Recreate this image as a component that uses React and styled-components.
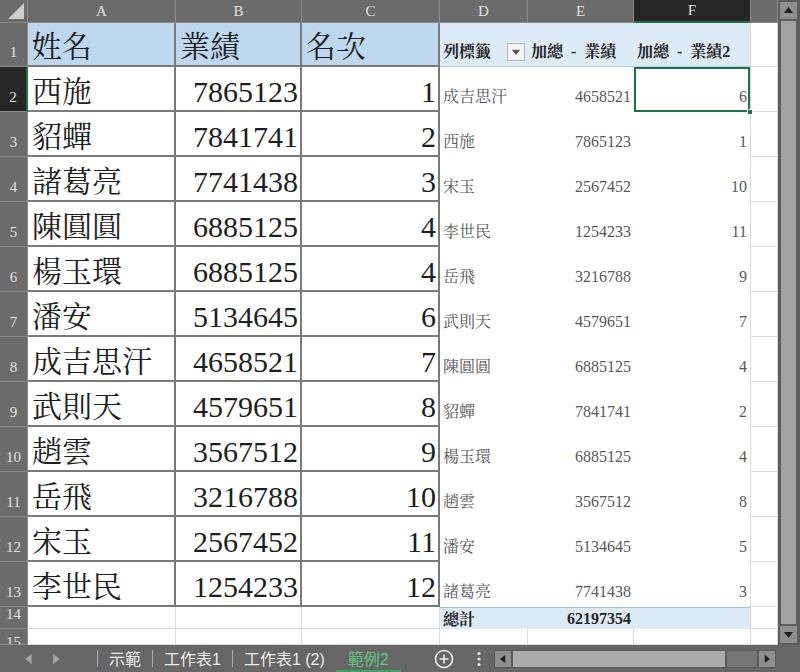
import React from "react";
import styled, { createGlobalStyle, css } from "styled-components";

const GlobalStyle = createGlobalStyle`
  html, body {
    margin: 0;
    padding: 0;
    background: #666;
  }
`;

const serif = `"Liberation Serif", "Noto Serif CJK TC", "Noto Sans CJK TC", serif`;
const sans = `"Liberation Sans", "Noto Sans CJK TC", sans-serif`;

const Window = styled.div`
  width: 800px;
  height: 672px;
  display: flex;
  flex-direction: column;
  overflow: hidden;
  background: #666;
`;

const SheetArea = styled.div`
  display: flex;
  height: 645px;
`;

const Grid = styled.div`
  display: grid;
  grid-template-columns: 28px 148px 126px 138px 88px 106px 117px 27px;
  grid-template-rows: 23px 44px repeat(12, 45px) 22px 16px;
  width: 778px;
  background: #fff;
  overflow: hidden;
`;

const Corner = styled.div`
  background: #6b6b6b;
  border-right: 1px solid #888;
  border-bottom: 1px solid #888;
  box-sizing: border-box;
  display: flex;
  align-items: flex-end;
  justify-content: flex-end;
  padding: 0 3px 3px 0;
`;

const ColHead = styled.div`
  box-sizing: border-box;
  display: flex;
  align-items: center;
  justify-content: center;
  font-family: ${serif};
  font-size: 15px;
  color: #e2e2e2;
  background: ${(p) => (p.$active ? "#262626" : "#6b6b6b")};
  border-right: 1px solid #8a8a8a;
  border-bottom: ${(p) => (p.$active ? "2px solid #217346" : "1px solid #8a8a8a")};
`;

const RowHead = styled.div`
  box-sizing: border-box;
  display: flex;
  justify-content: center;
  align-items: ${(p) => (p.$cut ? "flex-start" : "flex-end")};
  padding: ${(p) => (p.$cut ? "5px 0 0" : "0 0 6px")};
  overflow: hidden;
  font-family: ${serif};
  font-size: 15px;
  line-height: 16px;
  color: #e2e2e2;
  background: ${(p) => (p.$active ? "#262626" : "#6b6b6b")};
  border-bottom: 1px solid #8a8a8a;
  border-right: ${(p) => (p.$active ? "2px solid #217346" : "1px solid #8a8a8a")};
`;

const kinds = {
  th: css`
    background: #bdd7ee;
    border-right: 2px solid #7a7a7a;
    border-bottom: 2px solid #7a7a7a;
    font-size: 30px;
    line-height: 34px;
    color: #1e1e1e;
    padding: 0 2px 1px 4px;
  `,
  td: css`
    background: #fff;
    border-right: 2px solid #7a7a7a;
    border-bottom: 2px solid #7a7a7a;
    font-size: 30px;
    line-height: 34px;
    color: #1e1e1e;
    padding: 0 2px 1px 4px;
  `,
  ph: css`
    background: #ddebf7;
    border-bottom: 1px solid #b4d0ea;
    font-size: 16px;
    font-weight: bold;
    line-height: 20px;
    color: #262626;
    padding: 0 3px 4px;
    justify-content: space-between;
  `,
  pv: css`
    background: #fff;
    font-size: 16px;
    line-height: 20px;
    color: #595959;
    padding: 0 3px 5px;
  `,
  tot: css`
    background: #ddebf7;
    border-top: 1px solid #9bc2e6;
    font-size: 16px;
    font-weight: bold;
    color: #262626;
    align-items: center;
    padding: 0 3px;
  `,
  blank: css`
    background: #fff;
    border-right: 1px solid #dadada;
    border-bottom: 1px solid #dadada;
  `,
};

const Cell = styled.div`
  position: relative;
  box-sizing: border-box;
  display: flex;
  align-items: flex-end;
  justify-content: ${(p) => (p.$right ? "flex-end" : "flex-start")};
  overflow: hidden;
  white-space: pre;
  font-family: ${serif};
  ${(p) => kinds[p.$kind]}
  ${(p) => p.$edge && "border-right: 1px solid #dadada;"}
  ${(p) => p.$selected && "box-shadow: inset 0 0 0 2px #217346; overflow: visible;"}
`;

const FillHandle = styled.span`
  position: absolute;
  right: -3px;
  bottom: -3px;
  width: 6px;
  height: 6px;
  background: #217346;
  border: 1px solid #fff;
  box-sizing: border-box;
  z-index: 2;
`;

const DropBtn = styled.span`
  width: 18px;
  height: 18px;
  box-sizing: border-box;
  border: 1px solid #b8b8b8;
  background: #f4f4f4;
  display: flex;
  align-items: center;
  justify-content: center;
  margin-bottom: 1px;
`;

const VScroll = styled.div`
  width: 22px;
  display: flex;
  flex-direction: column;
  background: #5c5c5c;
  padding: 2px 3px 2px 2px;
  box-sizing: border-box;
  gap: 2px;
`;

const ScrollBtn = styled.div`
  height: ${(p) => p.$h || 17}px;
  width: ${(p) => p.$w || "auto"};
  flex: none;
  background: #8e8e8e;
  display: flex;
  align-items: center;
  justify-content: center;
`;

const VThumb = styled.div`
  flex: 1;
  background: #a2a2a2;
  margin: 0 1px;
`;

const TabBar = styled.div`
  height: 27px;
  display: flex;
  align-items: stretch;
  background: #666;
  font-family: ${sans};
  font-size: 16px;
  color: #ececec;
`;

const NavArea = styled.div`
  width: 97px;
  display: flex;
  align-items: center;
  gap: 17px;
  padding-left: 24px;
  box-sizing: border-box;
`;

const Sep = styled.span`
  width: 1px;
  height: 17px;
  align-self: center;
  background: #a8a8a8;
`;

const Tab = styled.div`
  display: flex;
  align-items: center;
  padding: 0 ${(p) => p.$pad || 11}px;
  color: ${(p) => (p.$active ? "#63c384" : "#ececec")};
  border-bottom: ${(p) => (p.$active ? "2px solid #3fa15f" : "2px solid transparent")};
  box-sizing: border-box;
`;

const IconSlot = styled.div`
  display: flex;
  align-items: center;
  justify-content: center;
  width: ${(p) => p.$w}px;
  margin-left: ${(p) => p.$ml || 0}px;
`;

const HScroll = styled.div`
  margin-left: 10px;
  width: 282px;
  height: 18px;
  align-self: center;
  display: flex;
  gap: 2px;
  background: #5a5a5a;
  padding: 1px;
  box-sizing: border-box;
`;

const HThumb = styled.div`
  width: 212px;
  background: #ababab;
`;

const HTrack = styled.div`
  flex: 1;
  background: #757575;
`;

const Tri = ({ dir, color = "#1e1e1e", size = 9 }) => {
  const pts = {
    up: "0,7 9,7 4.5,1",
    down: "0,2 9,2 4.5,8",
    left: "7,0 7,9 1,4.5",
    right: "2,0 2,9 8,4.5",
  }[dir];
  return (
    <svg width={size} height={size} viewBox="0 0 9 9">
      <polygon points={pts} fill={color} />
    </svg>
  );
};

const table = [
  ["西施", 7865123, 1],
  ["貂蟬", 7841741, 2],
  ["諸葛亮", 7741438, 3],
  ["陳圓圓", 6885125, 4],
  ["楊玉環", 6885125, 4],
  ["潘安", 5134645, 6],
  ["成吉思汗", 4658521, 7],
  ["武則天", 4579651, 8],
  ["趙雲", 3567512, 9],
  ["岳飛", 3216788, 10],
  ["宋玉", 2567452, 11],
  ["李世民", 1254233, 12],
];

const pivot = [
  ["成吉思汗", 4658521, 6],
  ["西施", 7865123, 1],
  ["宋玉", 2567452, 10],
  ["李世民", 1254233, 11],
  ["岳飛", 3216788, 9],
  ["武則天", 4579651, 7],
  ["陳圓圓", 6885125, 4],
  ["貂蟬", 7841741, 2],
  ["楊玉環", 6885125, 4],
  ["趙雲", 3567512, 8],
  ["潘安", 5134645, 5],
  ["諸葛亮", 7741438, 3],
];

// G is only partly in view, its letter sits past the edge
const letters = ["A", "B", "C", "D", "E", "F", ""];

function Sheet() {
  const cells = [];
  cells.push(
    <Corner key="corner">
      <svg width="16" height="16" viewBox="0 0 16 16">
        <polygon points="16,0 16,16 0,16" fill="#cfcfcf" />
      </svg>
    </Corner>
  );
  letters.forEach((l, i) =>
    cells.push(
      <ColHead key={"h" + i} $active={l === "F"}>
        {l}
      </ColHead>
    )
  );

  // row 1
  cells.push(<RowHead key="r1">1</RowHead>);
  cells.push(<Cell key="a1" $kind="th">姓名</Cell>);
  cells.push(<Cell key="b1" $kind="th">業績</Cell>);
  cells.push(<Cell key="c1" $kind="th">名次</Cell>);
  cells.push(
    <Cell key="d1" $kind="ph">
      <span>列標籤</span>
      <DropBtn>
        <Tri dir="down" color="#555" size={8} />
      </DropBtn>
    </Cell>
  );
  cells.push(<Cell key="e1" $kind="ph">{"加總\u2002-\u2002業績"}</Cell>);
  cells.push(<Cell key="f1" $kind="ph" $edge>{"加總\u2002-\u2002業績2"}</Cell>);
  cells.push(<Cell key="g1" $kind="blank" />);

  // rows 2-13
  table.forEach((row, i) => {
    const r = i + 2;
    const pv = pivot[i];
    cells.push(
      <RowHead key={"r" + r} $active={r === 2}>
        {r}
      </RowHead>
    );
    cells.push(<Cell key={"a" + r} $kind="td">{row[0]}</Cell>);
    cells.push(<Cell key={"b" + r} $kind="td" $right>{row[1]}</Cell>);
    cells.push(<Cell key={"c" + r} $kind="td" $right>{row[2]}</Cell>);
    cells.push(<Cell key={"d" + r} $kind="pv">{pv[0]}</Cell>);
    cells.push(<Cell key={"e" + r} $kind="pv" $right>{pv[1]}</Cell>);
    cells.push(
      <Cell key={"f" + r} $kind="pv" $right $edge $selected={r === 2}>
        {pv[2]}
        {r === 2 && <FillHandle />}
      </Cell>
    );
    cells.push(<Cell key={"g" + r} $kind="blank" />);
  });

  // row 14 - totals
  cells.push(<RowHead key="r14">14</RowHead>);
  cells.push(<Cell key="a14" $kind="blank" />);
  cells.push(<Cell key="b14" $kind="blank" />);
  cells.push(<Cell key="c14" $kind="blank" />);
  cells.push(<Cell key="d14" $kind="tot">總計</Cell>);
  cells.push(<Cell key="e14" $kind="tot" $right>62197354</Cell>);
  cells.push(<Cell key="f14" $kind="tot" $edge />);
  cells.push(<Cell key="g14" $kind="blank" />);

  // row 15 - partly visible
  cells.push(
    <RowHead key="r15" $cut>
      15
    </RowHead>
  );
  letters.forEach((l, i) => cells.push(<Cell key={"x15" + i} $kind="blank" />));

  return <Grid>{cells}</Grid>;
}

export default function App() {
  return (
    <>
      <GlobalStyle />
      <Window>
        <SheetArea>
          <Sheet />
          <VScroll>
            <ScrollBtn>
              <Tri dir="up" />
            </ScrollBtn>
            <VThumb />
            <ScrollBtn>
              <Tri dir="down" />
            </ScrollBtn>
          </VScroll>
        </SheetArea>
        <TabBar>
          <NavArea>
            <Tri dir="left" color="#a5a5a5" size={10} />
            <Tri dir="right" color="#a5a5a5" size={10} />
          </NavArea>
          <Sep />
          <Tab>示範</Tab>
          <Sep />
          <Tab>工作表1</Tab>
          <Sep />
          <Tab>工作表1 (2)</Tab>
          <Tab $active $pad={12}>範例2</Tab>
          <IconSlot $w={20} $ml={33}>
            <svg width="20" height="20" viewBox="0 0 20 20">
              <circle cx="10" cy="10" r="8.5" fill="none" stroke="#f0f0f0" strokeWidth="1.6" />
              <path d="M10 5.5v9M5.5 10h9" stroke="#f0f0f0" strokeWidth="1.6" />
            </svg>
          </IconSlot>
          <IconSlot $w={10} $ml={20}>
            <svg width="4" height="16" viewBox="0 0 4 16">
              <circle cx="2" cy="2.5" r="1.6" fill="#e8e8e8" />
              <circle cx="2" cy="8" r="1.6" fill="#e8e8e8" />
              <circle cx="2" cy="13.5" r="1.6" fill="#e8e8e8" />
            </svg>
          </IconSlot>
          <HScroll>
            <ScrollBtn $h={16} $w="16px">
              <Tri dir="left" size={8} />
            </ScrollBtn>
            <HThumb />
            <HTrack />
            <ScrollBtn $h={16} $w="16px">
              <Tri dir="right" size={8} />
            </ScrollBtn>
          </HScroll>
        </TabBar>
      </Window>
    </>
  );
}
